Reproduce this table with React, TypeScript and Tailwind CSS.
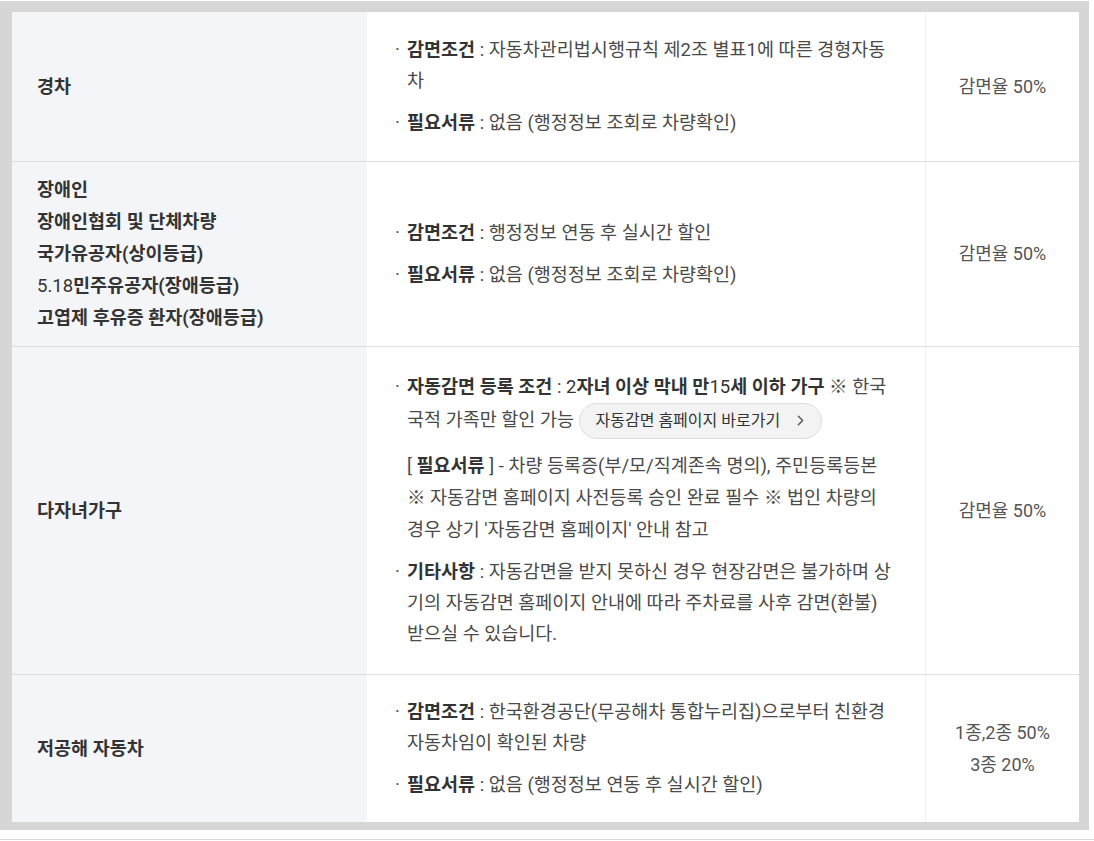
import { ChevronRight } from 'lucide-react'

const font = { fontFamily: 'Roboto, "Noto Sans CJK KR", sans-serif' }

function Item({ children }: { children: React.ReactNode }) {
  return (
    <div className="flex">
      <span className="w-[12px] shrink-0 text-[#555]">·</span>
      <div className="flex-1">{children}</div>
    </div>
  )
}

function Label({ children }: { children: React.ReactNode }) {
  return <b className="font-bold text-[#333]">{children}</b>
}

function Row({
  height,
  last,
  left,
  right,
  children,
}: {
  height: string
  last?: boolean
  left: React.ReactNode
  right: React.ReactNode
  children: React.ReactNode
}) {
  return (
    <div className={`grid grid-cols-[355px_558px_154px] ${height} ${last ? '' : 'border-b border-[#dedede]'}`}>
      <div className="flex items-center bg-[#f4f5f8] pl-[25px] text-[18.5px] font-bold leading-[32px] text-[#333]">
        <div>{left}</div>
      </div>
      <div className="flex flex-col justify-center gap-[11px] pl-[28px] pr-[20px] text-[18.5px] leading-[31px] text-[#4a4a4a]">
        {children}
      </div>
      <div className="flex items-center justify-center border-l border-[#f0f0f0] text-center text-[18px] leading-[32px] text-[#555]">
        <div>{right}</div>
      </div>
    </div>
  )
}

export default function App() {
  return (
    <div className="h-[841px] w-[1094px] bg-white pt-px" style={font}>
      <div className="w-[1089px] bg-[#d6d6d6] pb-[8px] pl-[12px] pr-[10px] pt-[11px]">
        <div className="bg-white">
          <Row height="h-[150px]" left="경차" right="감면율 50%">
            <Item>
              <Label>감면조건</Label> : 자동차관리법시행규칙 제2조 별표1에 따른 경형자동
              <br />차
            </Item>
            <Item>
              <Label>필요서류</Label> : 없음 (행정정보 조회로 차량확인)
            </Item>
          </Row>

          <Row
            height="h-[185px]"
            left={
              <>
                <div>장애인</div>
                <div>장애인협회 및 단체차량</div>
                <div>국가유공자(상이등급)</div>
                <div>
                  <span className="font-normal">5.18</span>민주유공자(장애등급)
                </div>
                <div>고엽제 후유증 환자(장애등급)</div>
              </>
            }
            right="감면율 50%"
          >
            <Item>
              <Label>감면조건</Label> : 행정정보 연동 후 실시간 할인
            </Item>
            <Item>
              <Label>필요서류</Label> : 없음 (행정정보 조회로 차량확인)
            </Item>
          </Row>

          <Row height="h-[328px]" left="다자녀가구" right="감면율 50%">
            <Item>
              <Label>자동감면 등록 조건</Label> :{' '}
              <Label>
                <span className="font-normal">2</span>자녀 이상 막내 만<span className="font-normal">15</span>세 이하 가구
              </Label>{' '}
              ※ 한국
              <br />
              국적 가족만 할인 가능{' '}
              <span className="inline-flex h-[36px] items-center gap-[12px] rounded-full border border-[#dcdcdc] bg-[#f3f3f3] pl-[16px] pr-[12px] align-middle text-[16px] leading-none text-[#333]">
                자동감면 홈페이지 바로가기
                <ChevronRight size={17} strokeWidth={2} className="text-[#555]" />
              </span>
            </Item>
            <div className="pl-[12px] leading-[32px]">
              [ <Label>필요서류</Label> ] - 차량 등록증(부/모/직계존속 명의), 주민등록등본
              <br />※ 자동감면 홈페이지 사전등록 승인 완료 필수 ※ 법인 차량의
              <br />
              경우 상기 '자동감면 홈페이지' 안내 참고
            </div>
            <Item>
              <Label>기타사항</Label> : 자동감면을 받지 못하신 경우 현장감면은 불가하며 상
              <br />
              기의 자동감면 홈페이지 안내에 따라 주차료를 사후 감면(환불)
              <br />
              받으실 수 있습니다.
            </Item>
          </Row>

          <Row
            height="h-[147px]"
            last
            left="저공해 자동차"
            right={
              <>
                <div>1종,2종 50%</div>
                <div>3종 20%</div>
              </>
            }
          >
            <Item>
              <Label>감면조건</Label> : 한국환경공단(무공해차 통합누리집)으로부터 친환경
              <br />
              자동차임이 확인된 차량
            </Item>
            <Item>
              <Label>필요서류</Label> : 없음 (행정정보 연동 후 실시간 할인)
            </Item>
          </Row>
        </div>
      </div>
      <div className="mt-[9px] h-px w-full bg-[#d9d9d9]" />
    </div>
  )
}
